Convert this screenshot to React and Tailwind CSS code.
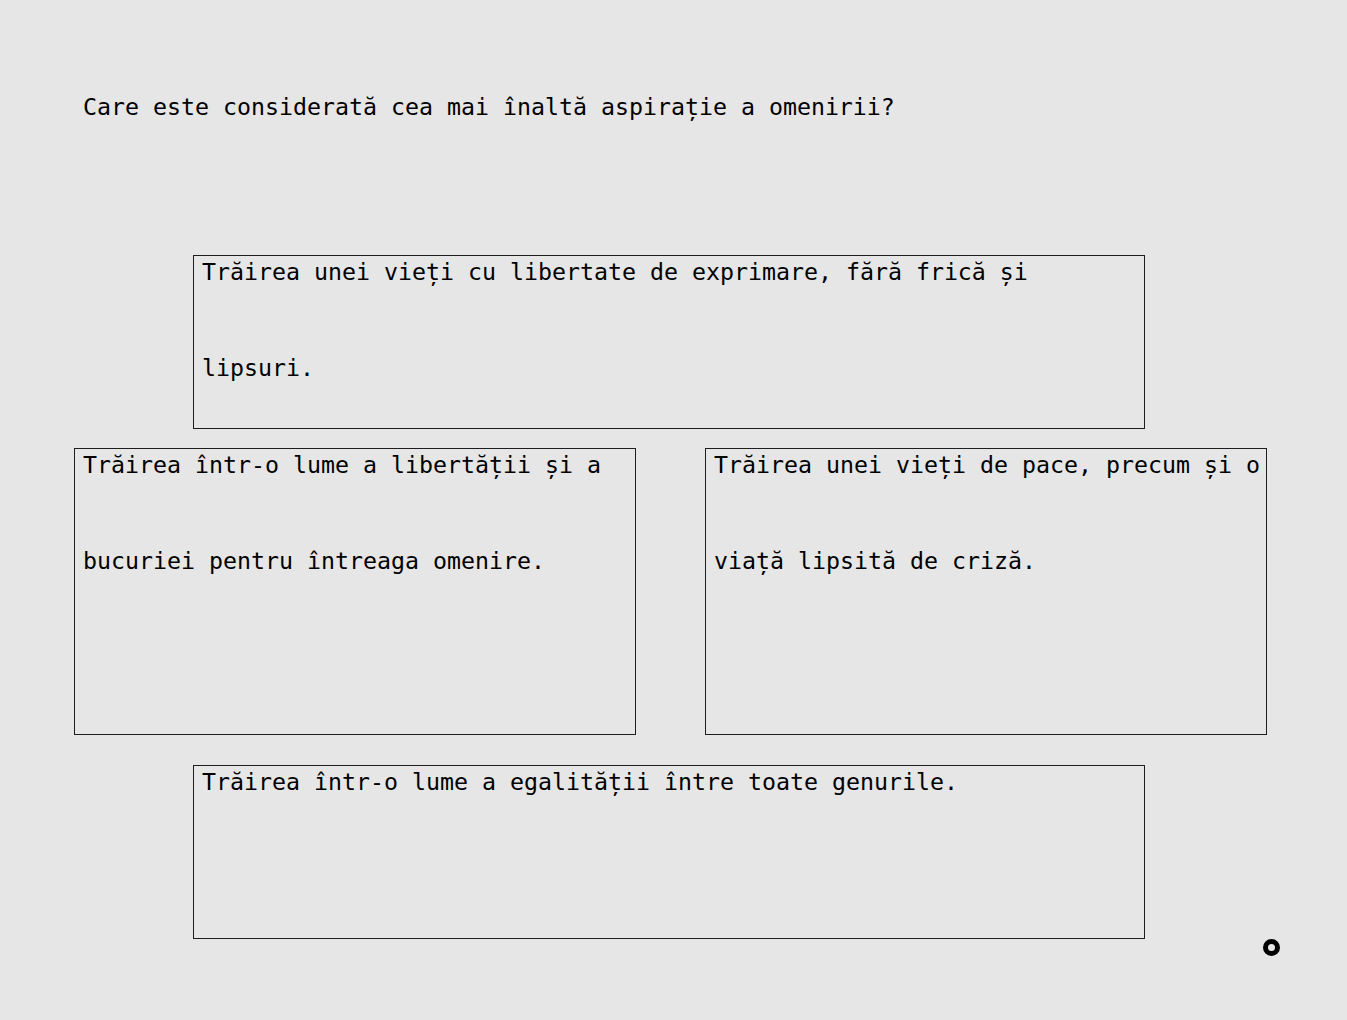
export default function App() {
    const Box = ({ lines, className }) => (
        <div className={`border border-[#1e1e1e] pl-[8px] flex flex-col gap-[64px] ${className}`}>
            {lines.map((l, i) => (
                <div key={i} className="leading-[32px] whitespace-pre">{l}</div>
            ))}
        </div>
    );

    return (
        <div className="relative h-[1020px] bg-[#e6e6e6] text-black text-[23.25px] font-['DejaVu_Sans_Mono','Liberation_Mono',monospace] overflow-hidden">
            <div className="pt-[91px] pl-[83px] leading-[32px]">
                Care este considerată cea mai înaltă aspirație a omenirii?
            </div>

            <Box
                className="mt-[132px] ml-[193px] w-[952px] h-[174px]"
                lines={['Trăirea unei vieți cu libertate de exprimare, fără frică și', 'lipsuri.']}
            />

            <div className="mt-[19px] ml-[74px] flex gap-[69px]">
                <Box
                    className="w-[562px] h-[287px]"
                    lines={['Trăirea într-o lume a libertății și a', 'bucuriei pentru întreaga omenire.']}
                />
                <Box
                    className="w-[562px] h-[287px]"
                    lines={['Trăirea unei vieți de pace, precum și o', 'viață lipsită de criză.']}
                />
            </div>

            <Box
                className="mt-[30px] ml-[193px] w-[952px] h-[174px]"
                lines={['Trăirea într-o lume a egalității între toate genurile.']}
            />

            {/* cursor ring */}
            <div className="absolute left-[1263px] top-[939px] w-[17px] h-[17px] rounded-full border-[5px] border-black" />
        </div>
    );
}
